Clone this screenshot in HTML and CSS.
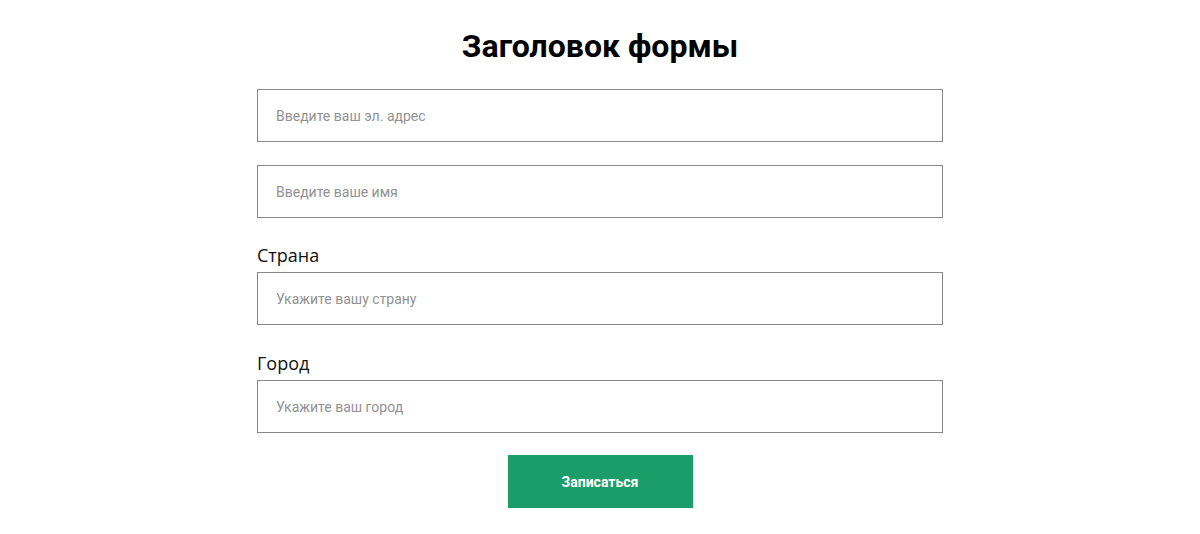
FILE: index.html
```html
<!DOCTYPE html>
<html lang="ru">

<head>
    <meta charset="utf-8">
    <title>Заголовок формы</title>
    <link rel="stylesheet" href="styles.css">
</head>

<body>
    <div class="form-wrap">
        <h1>Заголовок формы</h1>
        <form class="signup-form">
            <input type="email" class="field" placeholder="Введите ваш эл. адрес">
            <input type="text" class="field" placeholder="Введите ваше имя">

            <label class="field-label" for="country">Страна</label>
            <input type="text" id="country" class="field" placeholder="Укажите вашу страну">

            <label class="field-label field-label--city" for="city">Город</label>
            <input type="text" id="city" class="field" placeholder="Укажите ваш город">

            <button type="button" class="submit-btn">Записаться</button>
        </form>
    </div>
</body>

</html>
```

FILE: styles.css
```css
body {
    margin: 0;
    background: #fff;
    font-family: Roboto, 'Noto Sans', sans-serif;
}

.form-wrap {
    width: 686px;
    margin: 0 auto;
    padding-top: 27px;
}

h1 {
    margin: 0 0 24px;
    font-size: 32px;
    line-height: 38px;
    font-weight: 700;
    color: #000;
    text-align: center;
}

.signup-form {
    display: flex;
    flex-direction: column;
}

.field {
    box-sizing: border-box;
    width: 100%;
    height: 53px;
    margin: 0 0 23px;
    padding: 0 18px;
    border: 1px solid #888;
    border-radius: 0;
    font-family: Roboto, sans-serif;
    font-size: 14px;
    color: #333;
    background: #fff;
    outline: none;
}

.field::placeholder {
    color: #929292;
}

.field-label {
    display: block;
    margin: 2px 0 5px;
    font-family: 'Open Sans', sans-serif;
    font-size: 18px;
    line-height: 24px;
    color: #111;
}

.field-label--city {
    margin-top: 3px;
}

.submit-btn {
    align-self: center;
    width: 185px;
    height: 53px;
    margin-top: -1px;
    border: none;
    border-radius: 0;
    background-color: #1b9d69;
    color: #fff;
    font-family: Roboto, sans-serif;
    font-size: 14px;
    font-weight: 700;
    cursor: pointer;
}
```
